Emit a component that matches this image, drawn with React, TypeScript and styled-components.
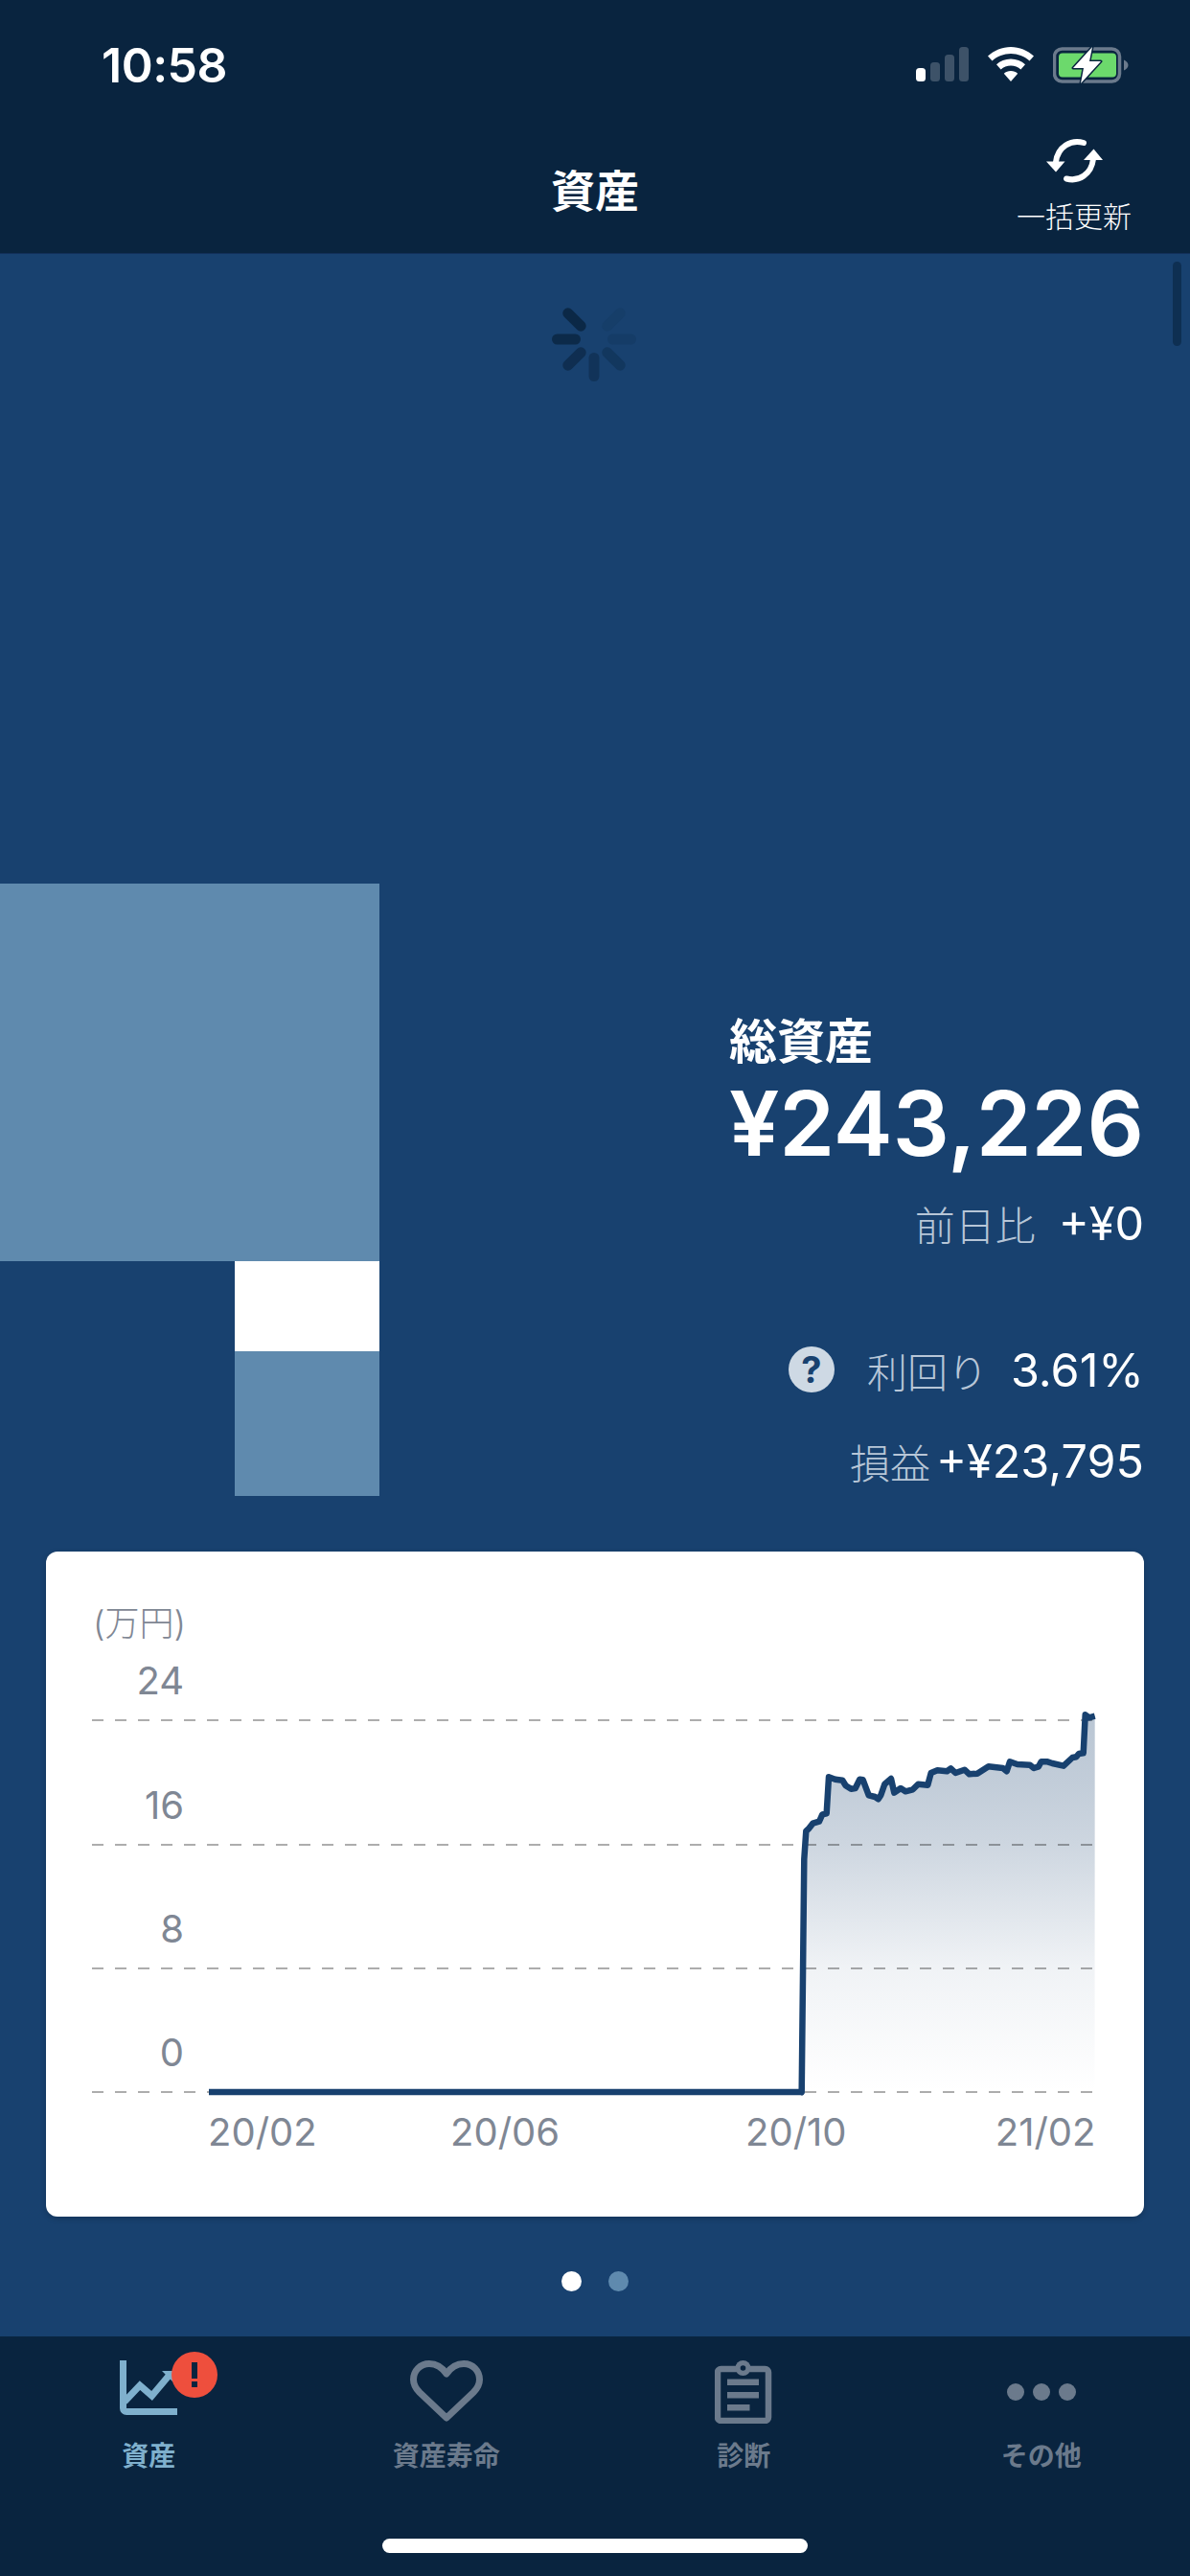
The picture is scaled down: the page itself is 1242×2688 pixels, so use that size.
import React from 'react';
import styled, { createGlobalStyle } from 'styled-components';

const GlobalStyle = createGlobalStyle`
  html, body {
    margin: 0;
    padding: 0;
    background: #09243f;
  }
  * {
    box-sizing: border-box;
  }
`;

const FONT = `Inter, "Noto Sans CJK JP", sans-serif`;
const NAVY = '#18416f';
const DARK = '#09243f';

const Screen = styled.div`
  position: relative;
  width: 1242px;
  height: 2688px;
  display: flex;
  flex-direction: column;
  overflow: hidden;
  background: ${NAVY};
  font-family: ${FONT};
`;

// Cabecera
const Header = styled.header`
  height: 265px;
  flex-shrink: 0;
  background: ${DARK};
  border-bottom: 1px solid #12305a;
  display: flex;
  flex-direction: column;
`;

const StatusBar = styled.div`
  height: 136px;
  padding: 0 64px 0 106px;
  display: flex;
  justify-content: space-between;
  align-items: flex-start;
`;

const Time = styled.span`
  margin-top: 41px;
  font-size: 50px;
  line-height: 54px;
  font-weight: 600;
  color: #fff;
  letter-spacing: -0.5px;
`;

const StatusIcons = styled.div`
  margin-top: 49px;
  display: flex;
  align-items: flex-start;
  gap: 20px;
`;

const NavBar = styled.div`
  position: relative;
  flex: 1;
  display: flex;
  justify-content: center;
`;

const NavTitle = styled.h1`
  margin: 32px 0 0;
  font-size: 46px;
  line-height: 62px;
  font-weight: 700;
  color: #fff;
`;

const RefreshButton = styled.div`
  position: absolute;
  right: 60px;
  top: 8px;
  width: 122px;
  display: flex;
  flex-direction: column;
  align-items: center;
  gap: 16px;
  font-size: 30px;
  line-height: 36px;
  font-weight: 300;
  color: #fff;
`;

// Contenido
const Main = styled.main`
  position: relative;
  flex: 1;
  display: flex;
  flex-direction: column;
`;

const ScrollThumb = styled.div`
  position: absolute;
  top: 8px;
  right: 9px;
  width: 9px;
  height: 88px;
  border-radius: 5px;
  background: rgba(8, 35, 63, 0.6);
`;

const SpinnerWrap = styled.div`
  height: 657px;
  padding: 44px 0 0 575px;
`;

const Hero = styled.section`
  display: flex;
  height: 639px;
`;

const Blocks = styled.div`
  width: 396px;
  display: flex;
  flex-direction: column;
  align-items: flex-end;
`;

const Block = styled.div<{ $w: number; $h: number; $color: string }>`
  width: ${(p) => p.$w}px;
  height: ${(p) => p.$h}px;
  background: ${(p) => p.$color};
`;

const Stats = styled.div`
  flex: 1;
  padding: 135px 48px 0 0;
  display: flex;
  flex-direction: column;
  align-items: flex-end;
`;

const TotalBlock = styled.div`
  display: flex;
  flex-direction: column;
`;

const TotalLabel = styled.div`
  font-size: 50px;
  line-height: 60px;
  font-weight: 700;
  color: #fff;
`;

const TotalValue = styled.div`
  margin-top: 3px;
  font-size: 93px;
  line-height: 104px;
  font-weight: 600;
  color: #fff;
  white-space: nowrap;
`;

const StatRow = styled.div<{ $top: number; $gap: number }>`
  margin-top: ${(p) => p.$top}px;
  display: flex;
  align-items: center;
  gap: ${(p) => p.$gap}px;
  height: 56px;
`;

const StatLabel = styled.span`
  font-size: 42px;
  font-weight: 300;
  color: #b7c6d7;
`;

const StatValue = styled.span`
  font-size: 48.500px;
  font-weight: 400;
  color: #fff;
  white-space: nowrap;
`;

const HelpIcon = styled.span`
  width: 48px;
  height: 48px;
  margin-right: 10px;
  border-radius: 50%;
  background: #ced9e4;
  color: ${NAVY};
  font-size: 38px;
  line-height: 48px;
  font-weight: 700;
  text-align: center;
`;

const ChartCard = styled.section`
  margin: 58px 48px 0;
  height: 694px;
  border-radius: 12px;
  background: #fff;
  box-shadow: 0 2px 6px rgba(0, 0, 0, 0.2);
  overflow: hidden;
`;

const AxisText = styled.text`
  font-family: ${FONT};
  font-size: 40px;
  fill: #7f8794;
`;

const AxisUnit = styled(AxisText)`
  font-size: 36px;
  font-weight: 300;
`;

const Pager = styled.div`
  height: 125px;
  display: flex;
  justify-content: center;
  align-items: center;
  gap: 28px;
  padding-top: 10px;
`;

const PagerDot = styled.span<{ $active?: boolean }>`
  width: 21px;
  height: 21px;
  border-radius: 50%;
  background: ${(p) => (p.$active ? '#fff' : '#5f8aae')};
`;

// Barra de pestañas
const TabBar = styled.nav`
  position: relative;
  height: 250px;
  flex-shrink: 0;
  background: ${DARK};
  display: grid;
  grid-template-columns: repeat(4, 1fr);
`;

const Tab = styled.div<{ $active?: boolean }>`
  height: 142px;
  display: flex;
  flex-direction: column;
  align-items: center;
  color: ${(p) => (p.$active ? '#7fb0cd' : '#6b7a8c')};
`;

const TabIcon = styled.div`
  position: relative;
  height: 108px;
  padding-top: 25px;
  display: flex;
  align-items: flex-start;
`;

const TabLabel = styled.span`
  font-size: 28px;
  line-height: 34px;
  font-weight: 700;
`;

const Badge = styled.span`
  position: absolute;
  top: 16px;
  left: 54px;
  width: 48px;
  height: 48px;
  border-radius: 50%;
  background: #ee4f3d;
  display: flex;
  align-items: center;
  justify-content: center;
`;

const DotsIcon = styled.div`
  margin-top: 24px;
  display: flex;
  gap: 9px;
`;

const Dot = styled.span`
  width: 18px;
  height: 18px;
  border-radius: 50%;
  background: currentColor;
`;

const HomeIndicator = styled.div`
  position: absolute;
  left: 399px;
  bottom: 24px;
  width: 444px;
  height: 15px;
  border-radius: 8px;
  background: #fff;
`;

// Datos de la gráfica, en píxeles de la pantalla
const raw: [number, number][] = [
  [170, 1270], [178, 540], [184, 452], [192, 445], [205, 428], [225, 422], [235, 400], [248, 397],
  [255, 283], [275, 290], [298, 293], [308, 310], [325, 320], [338, 318], [352, 290], [362, 292],
  [380, 340], [400, 345], [410, 352], [418, 340], [430, 305], [450, 288], [460, 332], [480, 318],
  [495, 328], [518, 322], [535, 305], [565, 308], [575, 270], [595, 262], [625, 265], [637, 256],
  [652, 270], [680, 260], [695, 274], [720, 272], [755, 250], [800, 255], [812, 265], [822, 235],
  [845, 243], [885, 245], [897, 255], [912, 250], [920, 235], [940, 235], [955, 240], [990, 248],
  [1018, 222], [1030, 220], [1038, 210], [1052, 208], [1058, 88], [1070, 97], [1088, 92],
];

const BASE_Y = 2183;
const END_X = 1142.5;
const upper = raw.map(([x, y]) => `${(780 + x / 3).toFixed(1)},${(1760 + y / 3).toFixed(1)}`);
const linePoints = [`218,${BASE_Y}`, `836,${BASE_Y}`, ...upper].join(' ');
const areaPoints = [`836,${BASE_Y}`, ...upper, `${END_X},${BASE_Y}`].join(' ');

const gridRows = [1795, 1925, 2054, BASE_Y];
const yLabels = [
  { text: '24', y: 1768 },
  { text: '16', y: 1898 },
  { text: '8', y: 2027 },
  { text: '0', y: 2156 },
];
const xLabels = [
  { text: '20/02', x: 217, anchor: 'start' },
  { text: '20/06', x: 470, anchor: 'start' },
  { text: '20/10', x: 778, anchor: 'start' },
  { text: '21/02', x: END_X + 1, anchor: 'end' },
];

const Chart: React.FC = () => (
  <svg width="1146" height="694" viewBox="48 1619 1146 694" style={{ display: 'block' }}>
    <defs>
      <linearGradient id="area" gradientUnits="userSpaceOnUse" x1="0" y1="1790" x2="0" y2={BASE_Y}>
        <stop offset="0" stopColor={NAVY} stopOpacity="0.3" />
        <stop offset="0.18" stopColor={NAVY} stopOpacity="0.264" />
        <stop offset="0.34" stopColor={NAVY} stopOpacity="0.216" />
        <stop offset="0.67" stopColor={NAVY} stopOpacity="0.065" />
        <stop offset="1" stopColor={NAVY} stopOpacity="0" />
      </linearGradient>
    </defs>
    <AxisUnit x="97" y="1707">(万円)</AxisUnit>
    {yLabels.map((l) => (
      <AxisText key={l.text} x="192" y={l.y} textAnchor="end">{l.text}</AxisText>
    ))}
    <polygon points={areaPoints} fill="url(#area)" />
    {gridRows.map((y) => (
      <line key={y} x1="96" x2={END_X} y1={y} y2={y} stroke="#000" strokeOpacity="0.32" strokeWidth="2" strokeDasharray="12 12" />
    ))}
    <polyline points={linePoints} fill="none" stroke={NAVY} strokeWidth="6.500" strokeLinejoin="round" />
    {xLabels.map((l) => (
      <AxisText key={l.text} x={l.x} y="2239" textAnchor={l.anchor}>{l.text}</AxisText>
    ))}
  </svg>
);

const Spinner: React.FC = () => {
  const spokes = [
    { deg: 0, o: 0 }, { deg: 45, o: 0.1 }, { deg: 90, o: 0.16 }, { deg: 135, o: 0.35 },
    { deg: 180, o: 0.45 }, { deg: 225, o: 0.62 }, { deg: 270, o: 0.78 }, { deg: 315, o: 0.85 },
  ];
  return (
    <svg width="90" height="90" viewBox="-45 -45 90 90">
      {spokes.map((s) => (
        <line key={s.deg} x1="0" y1="-19.5" x2="0" y2="-38.5" stroke={DARK} strokeOpacity={s.o}
          strokeWidth="11" strokeLinecap="round" transform={`rotate(${s.deg})`} />
      ))}
    </svg>
  );
};

const SignalIcon = () => (
  <svg width="55" height="36" viewBox="0 0 55 36">
    <rect x="0" y="22" width="10" height="14" rx="3.5" fill="#fff" />
    <rect x="15" y="16" width="10" height="20" rx="3.5" fill="#3d5268" />
    <rect x="30" y="8" width="10" height="28" rx="3.5" fill="#3d5268" />
    <rect x="45" y="0" width="10" height="36" rx="3.5" fill="#3d5268" />
  </svg>
);

const WifiIcon = () => (
  <svg width="48" height="36" viewBox="0 0 48 36">
    <path d="M24 0C15 0 6.500 3.600 0 9.500L4.500 14.500C9.800 9.800 16.600 7 24 7s14.200 2.800 19.500 7.500L48 9.500C41.500 3.600 33 0 24 0z" fill="#fff" />
    <path d="M24 12.500c-5.800 0-11 2.200-15 5.800l4.600 5.100c2.800-2.500 6.400-4 10.400-4s7.600 1.500 10.400 4l4.600-5.100c-4-3.600-9.200-5.800-15-5.800z" fill="#fff" />
    <path d="M24 25c-2.800 0-5.300 1-7.200 2.800L24 36l7.200-8.200C29.300 26 26.800 25 24 25z" fill="#fff" />
  </svg>
);

const BatteryIcon = () => (
  <svg width="79" height="38" viewBox="0 0 79 38">
    <rect x="1.500" y="2" width="68" height="34" rx="8" fill="none" stroke="#6b7a8c" strokeWidth="3.500" />
    <rect x="6" y="6.500" width="60" height="25" rx="4" fill="#6cd96c" />
    <path d="M74 13.500c2.500 1 4.500 3 4.500 5.500s-2 4.500-4.500 5.500z" fill="#6b7a8c" />
    <path d="M41 0L21 22H32L29 38 50 15H38z" fill="#fff" stroke={DARK} strokeWidth="3" strokeLinejoin="round" paintOrder="stroke" />
  </svg>
);

const RefreshIcon = () => (
  <svg width="59" height="48" viewBox="0 0 59 48">
    <path d="M39 5C26 1 12 9 10 25" fill="none" stroke="#fff" strokeWidth="6" strokeLinecap="round" />
    <path d="M0 24.500h19.500L10 35.500z" fill="#fff" />
    <path d="M21 42.500C34 46 47 38 49 22" fill="none" stroke="#fff" strokeWidth="6" strokeLinecap="round" />
    <path d="M39 23h20L49.500 11.500z" fill="#fff" />
  </svg>
);

const ChartIcon = () => (
  <svg width="60" height="60" viewBox="0 0 60 60">
    <path d="M3.500 0V50a3.500 3.500 0 0 0 3.500 3.500H60" fill="none" stroke="currentColor" strokeWidth="7" />
    <path d="M5 43L21 26 33.500 37 52 15" fill="none" stroke="currentColor" strokeWidth="7" />
    <path d="M44 11h14v14z" fill="currentColor" />
  </svg>
);

const HeartIcon = () => (
  <svg width="76" height="64" viewBox="0 0 76 64">
    <path d="M38 14C33.500 7.500 27.500 3.500 20 3.500 10.500 3.500 3.500 11 3.500 20 3.500 25.500 6 29.500 10 33.500L38 60 66 33.500C70 29.500 72.500 25.500 72.500 20 72.500 11 65.500 3.500 56 3.500 48.500 3.500 42.500 7.500 38 14Z"
      fill="none" stroke="currentColor" strokeWidth="7" strokeLinejoin="round" />
  </svg>
);

const ClipboardIcon = () => (
  <svg width="60" height="66" viewBox="0 0 60 66">
    <rect x="3" y="9" width="53" height="54" rx="3.500" fill="none" stroke="currentColor" strokeWidth="6.500" />
    <circle cx="29.500" cy="8" r="8" fill="currentColor" />
    <circle cx="29.500" cy="8" r="2.800" fill={DARK} />
    <rect x="13" y="19.500" width="33" height="6.500" fill="currentColor" />
    <rect x="13" y="33" width="33" height="6.500" fill="currentColor" />
    <rect x="13" y="46" width="23.500" height="6.500" fill="currentColor" />
  </svg>
);

const AlertMark = () => (
  <svg width="8" height="26" viewBox="0 0 8 26">
    <rect x="1" y="0" width="6" height="17" fill={DARK} />
    <rect x="1" y="20" width="6" height="6" fill={DARK} />
  </svg>
);

const App: React.FC = () => {
  return (
    <Screen>
      <GlobalStyle />
      <Header>
        <StatusBar>
          <Time>10:58</Time>
          <StatusIcons>
            <SignalIcon />
            <WifiIcon />
            <BatteryIcon />
          </StatusIcons>
        </StatusBar>
        <NavBar>
          <NavTitle>資産</NavTitle>
          <RefreshButton>
            <RefreshIcon />
            <span>一括更新</span>
          </RefreshButton>
        </NavBar>
      </Header>

      <Main>
        <ScrollThumb />
        <SpinnerWrap>
          <Spinner />
        </SpinnerWrap>

        <Hero>
          <Blocks>
            <Block $w={396} $h={394} $color="#5f8aae" />
            <Block $w={151} $h={94} $color="#fff" />
            <Block $w={151} $h={151} $color="#5f8aae" />
          </Blocks>
          <Stats>
            <TotalBlock>
              <TotalLabel>総資産</TotalLabel>
              <TotalValue>¥243,226</TotalValue>
            </TotalBlock>
            <StatRow $top={24} $gap={24}>
              <StatLabel>前日比</StatLabel>
              <StatValue>+¥0</StatValue>
            </StatRow>
            <StatRow $top={97} $gap={24}>
              <HelpIcon>?</HelpIcon>
              <StatLabel>利回り</StatLabel>
              <StatValue>3.61%</StatValue>
            </StatRow>
            <StatRow $top={39} $gap={6}>
              <StatLabel>損益</StatLabel>
              <StatValue>+¥23,795</StatValue>
            </StatRow>
          </Stats>
        </Hero>

        <ChartCard>
          <Chart />
        </ChartCard>

        <Pager>
          <PagerDot $active />
          <PagerDot />
        </Pager>
      </Main>

      <TabBar>
        <Tab $active>
          <TabIcon>
            <ChartIcon />
            <Badge><AlertMark /></Badge>
          </TabIcon>
          <TabLabel>資産</TabLabel>
        </Tab>
        <Tab>
          <TabIcon><HeartIcon /></TabIcon>
          <TabLabel>資産寿命</TabLabel>
        </Tab>
        <Tab>
          <TabIcon><ClipboardIcon /></TabIcon>
          <TabLabel>診断</TabLabel>
        </Tab>
        <Tab>
          <TabIcon>
            <DotsIcon>
              <Dot />
              <Dot />
              <Dot />
            </DotsIcon>
          </TabIcon>
          <TabLabel>その他</TabLabel>
        </Tab>
        <HomeIndicator />
      </TabBar>
    </Screen>
  );
};

export default App;
